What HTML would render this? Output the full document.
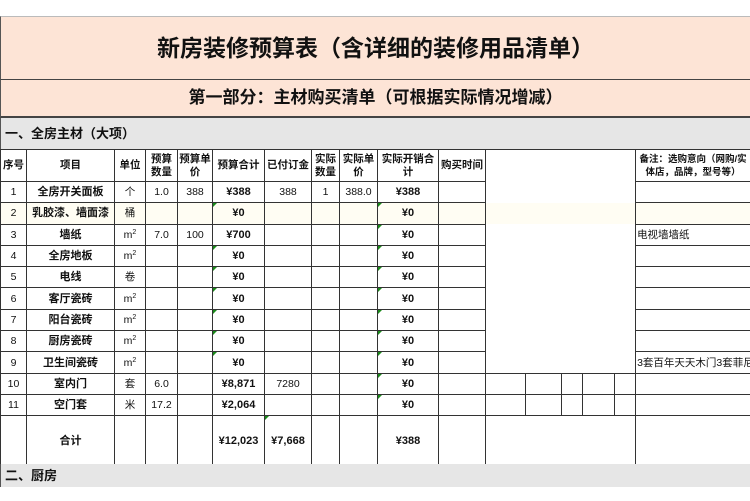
<!DOCTYPE html>
<html><head><meta charset="utf-8"><style>
*{margin:0;padding:0;box-sizing:border-box}
body{width:750px;height:501px;background:#fff;font-family:"Liberation Sans","Noto Sans CJK SC",sans-serif;color:#111;position:relative;overflow:hidden}
.band{position:absolute;left:0;width:750px;background:#fde4d6;text-align:center;font-weight:bold;border-left:1px solid #555}
#t1{top:16px;height:64px;border-top:1px solid #bbb;border-bottom:1px solid #444;font-size:23px;line-height:62px}
#t2{top:80px;height:38px;border-bottom:2px solid #444;font-size:17px;line-height:36px}
.sec{position:absolute;left:0;width:750px;background:#e6e6e6;font-weight:bold;font-size:13px;padding-left:4px;border-left:1px solid #555}
#s1{top:118px;height:31px;line-height:31px}
#s2{top:464px;height:23px;line-height:23px}
table{position:absolute;left:0;top:149px;border-collapse:collapse;table-layout:fixed;width:750px}
td{border:1px solid #333;font-size:10.5px;text-align:center;height:21.3px;line-height:12px;padding:0;position:relative;white-space:nowrap;overflow:hidden;vertical-align:middle}
tr.h td{height:32px;font-weight:bold;font-size:10.5px;line-height:13px;white-space:normal}
.b{font-weight:bold;font-size:11px}
.n{border-top:none;border-bottom:none}
.y td{background:#fffdf3}
.l{text-align:left;padding-left:1px}
.g::before{content:"";position:absolute;left:0;top:0;border-top:4px solid #1a8a1a;border-right:4px solid transparent}
sup{font-size:7px;line-height:0;vertical-align:0;position:relative;top:-4px}
tr.t td{height:50px}
</style></head><body>
<div class="band" id="t1">新房装修预算表（含详细的装修用品清单）</div>
<div class="band" id="t2">第一部分：主材购买清单（可根据实际情况增减）</div>
<div class="sec" id="s1">一、全房主材（大项）</div>
<table>
<colgroup><col style="width:26px"><col style="width:88px"><col style="width:31px"><col style="width:32px"><col style="width:35px"><col style="width:52px"><col style="width:47px"><col style="width:28px"><col style="width:38px"><col style="width:61px"><col style="width:47px"><col style="width:40px"><col style="width:36px"><col style="width:21px"><col style="width:32px"><col style="width:21px"><col style="width:115px"></colgroup>
<tr class="h"><td>序号</td><td>项目</td><td>单位</td><td>预算数量</td><td>预算单价</td><td>预算合计</td><td>已付订金</td><td>实际数量</td><td>实际单价</td><td>实际开销合计</td><td>购买时间</td><td colspan="5" style="border-bottom:none"></td><td style="font-size:9.5px">备注：选购意向（网购/实体店，品牌，型号等）</td></tr>
<tr><td>1</td><td class="b">全房开关面板</td><td>个</td><td>1.0</td><td>388</td><td class="b">¥388</td><td>388</td><td>1</td><td>388.0</td><td class="b">¥388</td><td></td><td colspan="5" class="n"></td><td></td></tr>
<tr class="y"><td>2</td><td class="b">乳胶漆、墙面漆</td><td>桶</td><td></td><td></td><td class="b g">¥0</td><td></td><td></td><td></td><td class="b g">¥0</td><td></td><td colspan="5" class="n"></td><td></td></tr>
<tr><td>3</td><td class="b">墙纸</td><td>m<sup>2</sup></td><td>7.0</td><td>100</td><td class="b">¥700</td><td></td><td></td><td></td><td class="b g">¥0</td><td></td><td colspan="5" class="n"></td><td class="l">电视墙墙纸</td></tr>
<tr><td>4</td><td class="b">全房地板</td><td>m<sup>2</sup></td><td></td><td></td><td class="b g">¥0</td><td></td><td></td><td></td><td class="b g">¥0</td><td></td><td colspan="5" class="n"></td><td></td></tr>
<tr><td>5</td><td class="b">电线</td><td>卷</td><td></td><td></td><td class="b g">¥0</td><td></td><td></td><td></td><td class="b g">¥0</td><td></td><td colspan="5" class="n"></td><td></td></tr>
<tr><td>6</td><td class="b">客厅瓷砖</td><td>m<sup>2</sup></td><td></td><td></td><td class="b g">¥0</td><td></td><td></td><td></td><td class="b g">¥0</td><td></td><td colspan="5" class="n"></td><td></td></tr>
<tr><td>7</td><td class="b">阳台瓷砖</td><td>m<sup>2</sup></td><td></td><td></td><td class="b g">¥0</td><td></td><td></td><td></td><td class="b g">¥0</td><td></td><td colspan="5" class="n"></td><td></td></tr>
<tr><td>8</td><td class="b">厨房瓷砖</td><td>m<sup>2</sup></td><td></td><td></td><td class="b g">¥0</td><td></td><td></td><td></td><td class="b g">¥0</td><td></td><td colspan="5" class="n"></td><td></td></tr>
<tr><td>9</td><td class="b">卫生间瓷砖</td><td>m<sup>2</sup></td><td></td><td></td><td class="b g">¥0</td><td></td><td></td><td></td><td class="b g">¥0</td><td></td><td colspan="5" class="n"></td><td class="l">3套百年天天木门3套菲尼</td></tr>
<tr><td>10</td><td class="b">室内门</td><td>套</td><td>6.0</td><td></td><td class="b">¥8,871</td><td>7280</td><td></td><td></td><td class="b g">¥0</td><td></td><td></td><td></td><td></td><td></td><td></td><td></td></tr>
<tr><td>11</td><td class="b">空门套</td><td>米</td><td>17.2</td><td></td><td class="b">¥2,064</td><td></td><td></td><td></td><td class="b g">¥0</td><td></td><td></td><td></td><td></td><td></td><td></td><td></td></tr>
<tr class="t"><td></td><td class="b">合计</td><td></td><td></td><td></td><td class="b">¥12,023</td><td class="b g">¥7,668</td><td></td><td></td><td class="b">¥388</td><td></td><td colspan="5"></td><td></td></tr>
</table>
<div class="sec" id="s2">二、厨房</div>
</body></html>
